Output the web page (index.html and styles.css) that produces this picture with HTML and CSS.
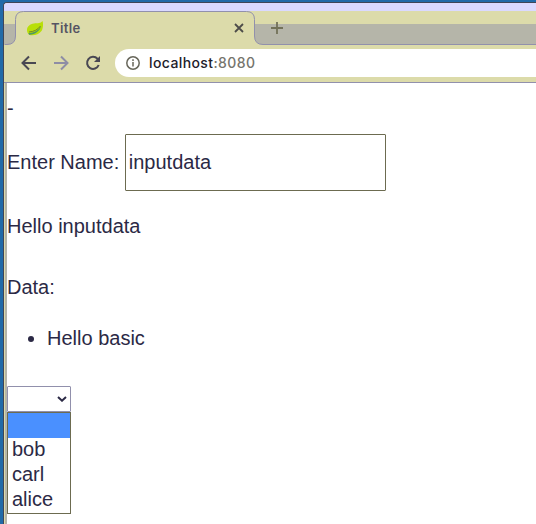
FILE: index.html
```html
<!DOCTYPE html>
<html lang="en">
<head>
<meta charset="utf-8">
<title>Title</title>
<link rel="stylesheet" href="styles.css">
</head>
<body>
<div class="window">
  <header class="browser">
    <div class="titlebar"></div>
    <div class="tabstrip">
      <svg class="tab-shape" width="532" height="34" viewBox="0 0 532 34">
        <path class="tab-fill" d="M1 34V33.5H3Q11.5 33.5 11.5 25V8.500Q11.500 .5 19.500 .5H242.500Q250.500 .5 250.500 8.500V25Q250.500 33.500 259 33.500H532V34Z"/>
        <path class="tab-line" d="M1 33.500H3Q11.500 33.500 11.500 25V8.500Q11.500 .5 19.500 .5H242.500Q250.500 .5 250.500 8.500V25Q250.500 33.500 259 33.500H532"/>
      </svg>
      <div class="tab">
        <svg class="leaf" width="16" height="15" viewBox="0 0 16 15">
          <path fill="#b8df08" d="M15.500 0C13.500 2.500 11 2 7 2.500C3 3 0 5.500 0 9C0 11 1 13 2.500 14C7 15 12 13.500 14.500 10C16 7.500 16.500 3 15.500 0Z"/>
          <path fill="#519a60" d="M1.500 12C7 12 11 9.500 14 5.500C13 9.500 8 14 2 13.700Z"/>
          <path fill="none" stroke="#72802b" d="M2 11Q9.500 10.500 13.500 5"/>
        </svg>
        <span class="tab-title">Title</span>
        <svg class="close" width="10" height="10" viewBox="0 0 10 10"><path d="M1 1L9 9M9 1L1 9"/></svg>
      </div>
      <svg class="plus" width="12" height="12" viewBox="0 0 12 12"><path d="M6 0V12M0 6H12"/></svg>
    </div>
    <div class="toolbar">
      <svg class="nav" width="16" height="16" viewBox="0 0 16 16"><path d="M15 8H2M8 1.500L1.500 8L8 14.500"/></svg>
      <svg class="nav forward" width="16" height="16" viewBox="0 0 16 16"><path d="M1 8H14M8 1.500L14.500 8L8 14.500"/></svg>
      <svg class="nav" width="16" height="16" viewBox="0 0 16 16"><path d="M13.700 10A6 6 0 1 1 12.500 3.800L14 5.500"/><path class="tip" d="M15 1V7H9Z"/></svg>
      <div class="address">
        <svg class="info" width="14" height="14" viewBox="0 0 14 14"><circle cx="7" cy="7" r="6.200"/><path d="M7 6V10.500M7 3.300V4.900"/></svg>
        <span class="url">localhost<span class="port">:8080</span></span>
      </div>
    </div>
  </header>
  <main class="page">
    <p class="dash">-</p>
    <label class="field">Enter Name: <input type="text" value="inputdata"></label>
    <p class="greeting">Hello inputdata</p>
    <p class="data">Data:</p>
    <ul><li>Hello basic</li></ul>
    <div class="picker">
      <div class="select"><svg width="10" height="6" viewBox="0 0 10 6"><path d="M1 1L5 4.700L9 1"/></svg></div>
      <div class="options">
        <div class="option selected"></div>
        <div class="option">bob</div>
        <div class="option">carl</div>
        <div class="option">alice</div>
      </div>
    </div>
  </main>
</div>
</body>
</html>
```
FILE: styles.css
```css
* { box-sizing: border-box; }
body {
  margin: 0;
  height: 524px;
  overflow: hidden;
  background: #216aa8;
  padding: 2px 0 0 3px;
  font-family: "Liberation Sans", Arial, sans-serif;
}
svg { display: block; flex: none; }
.window {
  height: 522px;
  border-top: 1px solid #404657;
  border-left: 1px solid #404657;
  border-top-left-radius: 4px;
  background: #dcdbaa;
  overflow: hidden;
}
.browser { height: 80px; border-bottom: 1px solid #9190ac; }
.titlebar { height: 8px; background: #dad9ff; }
.tabstrip {
  position: relative;
  display: flex;
  height: 34px;
  background: linear-gradient(#dcdbaa 13px, #b5b5a9 13px);
}
.tab-shape { position: absolute; left: 0; top: 0; }
.tab-fill { fill: #dcdbaa; }
.tab-line { fill: none; stroke: #9190ac; }
.tab {
  position: relative;
  display: flex;
  align-items: center;
  width: 251px;
  height: 34px;
  padding: 0 11px 0 23px;
}
.leaf { margin-top: 1px; }
.tab-title {
  flex: 1;
  margin-left: 8px;
  font: 600 13px/18px Inter, sans-serif;
  letter-spacing: .35px;
  color: #555463;
}
.close, .plus { fill: none; stroke: #4d4c49; stroke-width: 1.8; }
.plus { position: relative; margin: 11px 0 0 16px; stroke: #727158; }
.toolbar {
  display: flex;
  align-items: center;
  height: 37px;
  padding: 0 0 1px 17px;
}
.nav { margin-right: 16px; fill: none; stroke: #494853; stroke-width: 2; }
.nav.forward { stroke: #8e8da5; }
.nav .tip { fill: #494853; stroke: none; }
.address {
  display: flex;
  align-items: center;
  flex: 1;
  height: 28px;
  margin-left: -2px;
  padding-left: 11px;
  border-radius: 14px 0 0 14px;
  background: #fff;
}
.info { fill: none; stroke: #67665a; stroke-width: 1.500; }
.url {
  margin-left: 9px;
  font: 500 14px/20px Inter, sans-serif;
  letter-spacing: .4px;
  color: #22212a;
}
.port { color: #75746c; }
.page {
  height: 441px;
  border-left: 2px solid #b5b5a9;
  margin-left: 1px;
  padding-top: 14px;
  background: #fff;
  color: #2b2945;
  font-size: 20px;
  line-height: 23px;
}
p { margin: 0; }
.field {
  display: flex;
  align-items: center;
  gap: 6px;
  margin-top: 14px;
}
input {
  width: 261px;
  height: 57px;
  padding: 0 2.5px;
  border: 1px solid #6c6b50;
  border-radius: 1px;
  background: #fff;
  color: inherit;
  font: inherit;
}
.greeting { margin-top: 24px; }
.data { margin-top: 38px; }
ul { margin: 28px 0 0; padding-left: 40px; }
.picker { width: 64px; margin-top: 36px; }
.select {
  display: flex;
  align-items: center;
  justify-content: flex-end;
  height: 26px;
  padding-right: 3px;
  border: 1px solid #9190ac;
  border-radius: 1px;
}
.select svg { fill: none; stroke: #2b2945; stroke-width: 2; }
.options { height: 102px; border: 1px solid #6c6b50; }
.option { height: 25px; padding-left: 4px; line-height: 22px; }
.selected { background: #4a90ff; }
```
